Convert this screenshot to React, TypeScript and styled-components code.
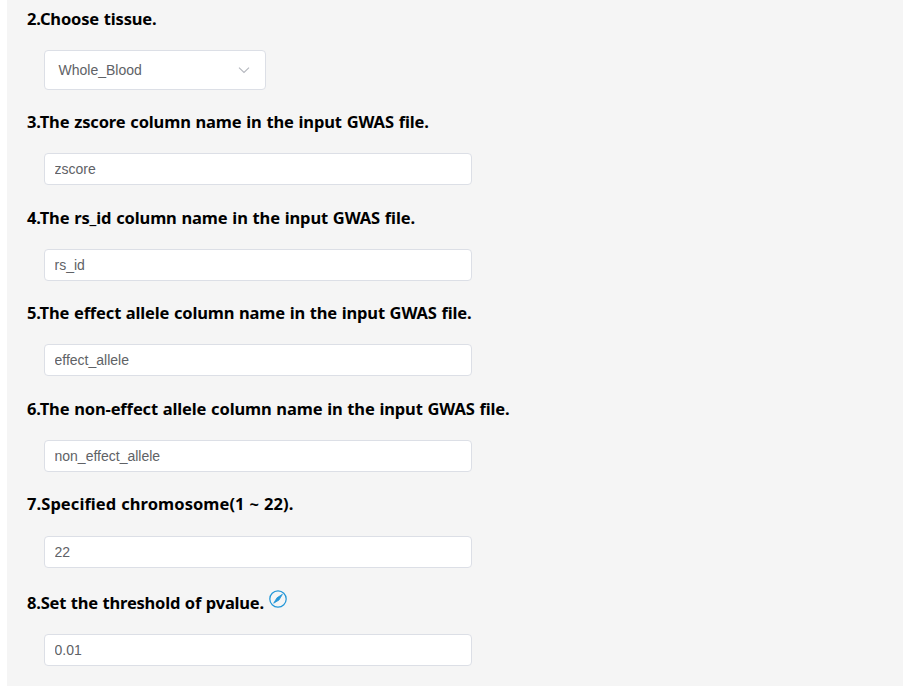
import React from "react";
import styled, { createGlobalStyle } from "styled-components";

const GlobalStyle = createGlobalStyle`
  * { box-sizing: border-box; }
  body { margin: 0; background: #fff; }
`;

const Panel = styled.main`
  margin: 0 7px;
  height: 686px;
  padding: 7px 20px 0;
  background: #f5f5f5;
  overflow: hidden;
`;

const Field = styled.section<{ $height: number }>`
  height: ${(p) => p.$height}px;
`;

const Heading = styled.h3<{ $tracking?: number }>`
  display: flex;
  margin: 0;
  height: 24px;
  font: 700 16.5px/24px "Noto Sans", "Open Sans", sans-serif;
  letter-spacing: ${(p) => p.$tracking ?? 0}px;
  word-spacing: 0.6px;
  color: #000;
  white-space: nowrap;
`;

const Input = styled.input<{ $gap?: number }>`
  display: block;
  width: 428px;
  height: 32px;
  margin: ${(p) => p.$gap ?? 19}px 0 0 17px;
  padding: 0 9.5px;
  border: 1px solid #dcdfe6;
  border-radius: 4px;
  outline: none;
  background: #fff;
  color: #606266;
  font: 14px "Liberation Sans", Arial, sans-serif;
`;

const Select = styled.button`
  display: flex;
  align-items: center;
  justify-content: space-between;
  width: 222px;
  height: 40px;
  margin: 19px 0 0 17px;
  padding: 0 14px 0 13.5px;
  border: 1px solid #dcdfe6;
  border-radius: 4px;
  background: #fff;
  color: #606266;
  font: 14px "Liberation Sans", Arial, sans-serif;
`;

const Chevron = styled.svg`
  width: 14px;
  height: 14px;
  fill: none;
  stroke: #b4b7be;
  stroke-width: 1.1;
`;

const EditIcon = styled.svg`
  width: 18px;
  height: 18px;
  margin: -1px 0 0 5px;
  fill: none;
  stroke: #2497d8;
  stroke-width: 1.25;
`;

export default function App() {
  return (
    <>
      <GlobalStyle />
      <Panel>
        <Field $height={103}>
          <Heading $tracking={-0.16}>2.Choose tissue.</Heading>
          <Select type="button">
            Whole_Blood
            <Chevron viewBox="0 0 14 14"><path d="M2 4.7 7 9.5l5-4.8" /></Chevron>
          </Select>
        </Field>
        <Field $height={96}>
          <Heading $tracking={-0.13}>3.The zscore column name in the input GWAS file.</Heading>
          <Input defaultValue="zscore" />
        </Field>
        <Field $height={95}>
          <Heading $tracking={-0.12}>4.The rs_id column name in the input GWAS file.</Heading>
          <Input defaultValue="rs_id" />
        </Field>
        <Field $height={96}>
          <Heading $tracking={-0.16}>5.The effect allele column name in the input GWAS file.</Heading>
          <Input defaultValue="effect_allele" />
        </Field>
        <Field $height={95}>
          <Heading $tracking={-0.13}>6.The non-effect allele column name in the input GWAS file.</Heading>
          <Input defaultValue="non_effect_allele" />
        </Field>
        <Field $height={99}>
          <Heading $tracking={0.07}>7.Specified chromosome(1 ~ 22).</Heading>
          <Input $gap={20} defaultValue="22" />
        </Field>
        <Field $height={90}>
          <Heading $tracking={-0.21}>
            8.Set the threshold of pvalue.
            <EditIcon viewBox="0 0 18 18">
              <circle cx="9" cy="9" r="8.2" />
              <path d="M13.4 4.3 8 7.8 4.7 13.2 10 10Z" fill="#2497d8" strokeWidth="0.8" strokeLinejoin="round" />
            </EditIcon>
          </Heading>
          <Input defaultValue="0.01" />
        </Field>
      </Panel>
    </>
  );
}
